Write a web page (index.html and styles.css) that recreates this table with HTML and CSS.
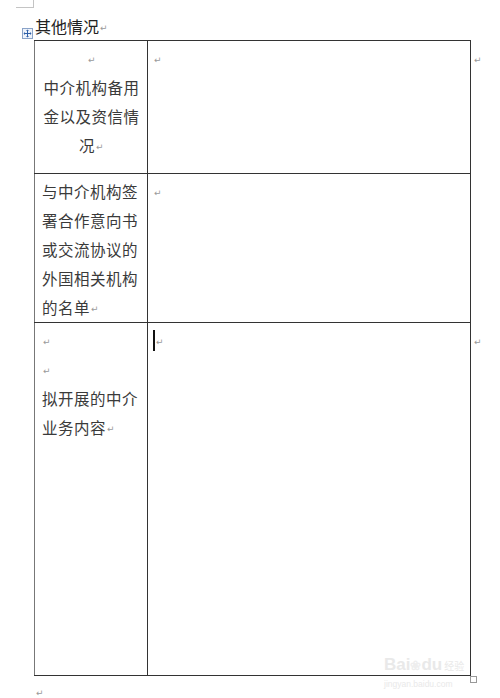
FILE: index.html
```html
<!DOCTYPE html>
<html lang="zh">
<head>
<meta charset="utf-8">
<link rel="stylesheet" href="styles.css">
</head>
<body>
<div class="page">
  <div class="corner"></div>
  <div class="title">其他情况<span class="ret">↵</span></div>
  <div class="table-wrap">
    <div class="handle">
      <svg width="11" height="11" viewBox="0 0 11 11">
        <rect x="0.5" y="0.5" width="10" height="10" fill="#eef3fb" stroke="#8aa3c8"/>
        <path d="M5.5 2 V9 M2 5.5 H9" stroke="#2d5fa8" stroke-width="1"/>
        <path d="M5.5 1.5 L4 3 H7 Z M5.5 9.5 L4 8 H7 Z M1.5 5.5 L3 4 V7 Z M9.5 5.5 L8 4 V7 Z" fill="#2d5fa8"/>
      </svg>
    </div>
    <table class="doc-table">
      <colgroup><col class="c1"><col class="c2"><col class="c3"></colgroup>
      <tr class="r1">
        <td class="label center"><span class="ret">↵</span><br>中介机构备用<br>金以及资信情<br>况<span class="ret">↵</span></td>
        <td class="value"><span class="ret">↵</span></td>
        <td class="rowend"><span class="ret">↵</span></td>
      </tr>
      <tr class="r2">
        <td class="label">与中介机构签<br>署合作意向书<br>或交流协议的<br>外国相关机构<br>的名单<span class="ret">↵</span></td>
        <td class="value"><span class="ret">↵</span></td>
        <td class="rowend"></td>
      </tr>
      <tr class="r3">
        <td class="label"><span class="ret">↵</span><br><span class="ret">↵</span><br>拟开展的中介<br>业务内容<span class="ret">↵</span></td>
        <td class="value"><span class="cursor"></span><span class="ret">↵</span></td>
        <td class="rowend"><span class="ret">↵</span></td>
      </tr>
    </table>
    <div class="resize"></div>
    <div class="watermark">
      <div class="wm-logo">Bai<span class="paw">❀</span>du<span class="wm-cn">经验</span></div>
      <div class="wm-url">jingyan.baidu.com</div>
    </div>
  </div>
  <div class="after"><span class="ret">↵</span></div>
</div>
</body>
</html>
```
FILE: styles.css
```css
* { box-sizing: border-box; }
html, body { margin: 0; padding: 0; background: #fff; }
body {
  width: 500px;
  height: 698px;
  overflow: hidden;
  font-family: "Noto Sans CJK SC", "Noto Sans", sans-serif;
  color: #3a3a3a;
}
.page { position: relative; }
.corner {
  margin-left: 16px;
  width: 18px;
  height: 8px;
  border-right: 1px solid #c4c4c4;
  border-bottom: 1px solid #c4c4c4;
}
.title {
  padding-top: 4px;
  margin-left: 35px;
  height: 32px;
  line-height: 28px;
  font-size: 16px;
  color: #222;
}
.ret {
  font-family: "DejaVu Sans", sans-serif;
  font-size: 9px;
  line-height: 1;
  color: #9a9a9a;
  vertical-align: middle;
  margin-left: 1px;
}
.table-wrap {
  position: relative;
  margin-left: 34px;
}
.handle {
  position: absolute;
  left: -12px;
  top: -12px;
  width: 11px;
  height: 11px;
  line-height: 0;
}
.doc-table {
  border-collapse: collapse;
  table-layout: fixed;
  width: 466px;
}
.c1 { width: 113px; }
.c2 { width: 323px; }
.c3 { width: 30px; }
.doc-table td {
  vertical-align: top;
  padding: 3px 6px 0 7px;
  font-size: 15.5px;
  line-height: 29px;
  letter-spacing: 0.5px;
}
.doc-table td.label,
.doc-table td.value {
  border: 1.5px solid #333;
}
.doc-table td.label { border-left-color: #777; }
.doc-table td.value { padding-left: 5px; }
.doc-table td.center { text-align: center; }
.r1 { height: 133px; }
.r2 { height: 149px; }
.r3 { height: 353px; }
.doc-table td.rowend { padding-left: 2px; border: none; }
.cursor {
  display: inline-block;
  width: 2px;
  height: 21px;
  background: #111;
  vertical-align: middle;
  margin-top: -4px;
}
.resize {
  position: absolute;
  left: 436px;
  bottom: -7px;
  width: 7px;
  height: 7px;
  border: 1px solid #999;
  background: #fff;
}
.watermark {
  position: absolute;
  left: 350px;
  bottom: -14px;
  color: #e9e9e9;
  font-family: "Liberation Sans", sans-serif;
  pointer-events: none;
  white-space: nowrap;
}
.wm-logo {
  font-size: 17px;
  font-weight: bold;
  line-height: 20px;
}
.paw { font-size: 13px; color: #eeeeee; }
.wm-cn {
  font-family: "Noto Sans CJK SC", sans-serif;
  font-size: 10px;
  font-weight: normal;
  margin-left: 2px;
}
.wm-url {
  font-size: 8.5px;
  line-height: 11px;
  margin-top: 3px;
}
.after {
  margin-left: 35px;
  padding-top: 8px;
  line-height: 14px;
}
```
